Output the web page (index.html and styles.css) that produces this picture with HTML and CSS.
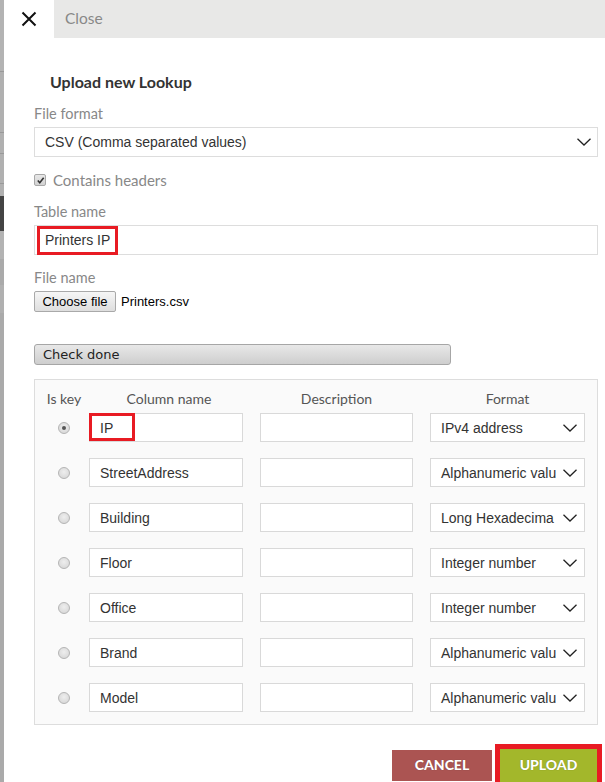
FILE: index.html
```html
<!DOCTYPE html>
<html>
<head>
<meta charset="utf-8">
<link rel="stylesheet" href="styles.css">
</head>
<body>
<div class="page">
  <div class="strip"></div>
  <div class="panel">
    <div class="topbar">
      <div class="xbtn">
        <svg width="16" height="16" viewBox="0 0 16 16"><path d="M1.5 1.5 L14.5 14.5 M14.5 1.5 L1.5 14.5" stroke="#111" stroke-width="2" fill="none"/></svg>
      </div>
      <div class="closebar">Close</div>
    </div>
    <div class="content">
      <div class="title">Upload new Lookup</div>

      <div class="label first">File format</div>
      <div class="field select">
        <span class="val">CSV (Comma separated values)</span>
        <svg class="chev" width="14" height="8" viewBox="0 0 14 8"><path d="M0.5 0.8 L7 7 L13.5 0.8" stroke="#222" stroke-width="1.3" fill="none"/></svg>
      </div>

      <div class="checkrow">
        <span class="checkbox"><svg width="10" height="10" viewBox="0 0 10 10"><path d="M2 5 L4.2 7.5 L8.5 2" stroke="#333" stroke-width="1.8" fill="none"/></svg></span>
        <span class="checklabel">Contains headers</span>
      </div>

      <div class="label">Table name</div>
      <div class="field input">
        <span class="val">Printers IP</span>
        <span class="mark mark-table"></span>
      </div>

      <div class="label">File name</div>
      <div class="filerow">
        <span class="filebtn">Choose file</span>
        <span class="filename">Printers.csv</span>
      </div>

      <div class="checkdone">Check done</div>

      <div class="cols">
        <div class="hd c1">Is key</div>
        <div class="hd c2">Column name</div>
        <div class="hd c3">Description</div>
        <div class="hd c4">Format</div>

        <div class="c1 rcell"><span class="radio on"></span></div>
        <div class="c2"><div class="box name">IP<span class="mark mark-ip"></span></div></div>
        <div class="c3"><div class="box"></div></div>
        <div class="c4"><div class="box fmt"><span class="val">IPv4 address</span><svg class="chev" width="14" height="8" viewBox="0 0 14 8"><path d="M0.5 0.8 L7 7 L13.5 0.8" stroke="#222" stroke-width="1.3" fill="none"/></svg></div></div>

        <div class="c1 rcell"><span class="radio"></span></div>
        <div class="c2"><div class="box name">StreetAddress</div></div>
        <div class="c3"><div class="box"></div></div>
        <div class="c4"><div class="box fmt"><span class="val">Alphanumeric valu</span><svg class="chev" width="14" height="8" viewBox="0 0 14 8"><path d="M0.5 0.8 L7 7 L13.5 0.8" stroke="#222" stroke-width="1.3" fill="none"/></svg></div></div>

        <div class="c1 rcell"><span class="radio"></span></div>
        <div class="c2"><div class="box name">Building</div></div>
        <div class="c3"><div class="box"></div></div>
        <div class="c4"><div class="box fmt"><span class="val">Long Hexadecima</span><svg class="chev" width="14" height="8" viewBox="0 0 14 8"><path d="M0.5 0.8 L7 7 L13.5 0.8" stroke="#222" stroke-width="1.3" fill="none"/></svg></div></div>

        <div class="c1 rcell"><span class="radio"></span></div>
        <div class="c2"><div class="box name">Floor</div></div>
        <div class="c3"><div class="box"></div></div>
        <div class="c4"><div class="box fmt"><span class="val">Integer number</span><svg class="chev" width="14" height="8" viewBox="0 0 14 8"><path d="M0.5 0.8 L7 7 L13.5 0.8" stroke="#222" stroke-width="1.3" fill="none"/></svg></div></div>

        <div class="c1 rcell"><span class="radio"></span></div>
        <div class="c2"><div class="box name">Office</div></div>
        <div class="c3"><div class="box"></div></div>
        <div class="c4"><div class="box fmt"><span class="val">Integer number</span><svg class="chev" width="14" height="8" viewBox="0 0 14 8"><path d="M0.5 0.8 L7 7 L13.5 0.8" stroke="#222" stroke-width="1.3" fill="none"/></svg></div></div>

        <div class="c1 rcell"><span class="radio"></span></div>
        <div class="c2"><div class="box name">Brand</div></div>
        <div class="c3"><div class="box"></div></div>
        <div class="c4"><div class="box fmt"><span class="val">Alphanumeric valu</span><svg class="chev" width="14" height="8" viewBox="0 0 14 8"><path d="M0.5 0.8 L7 7 L13.5 0.8" stroke="#222" stroke-width="1.3" fill="none"/></svg></div></div>

        <div class="c1 rcell"><span class="radio"></span></div>
        <div class="c2"><div class="box name">Model</div></div>
        <div class="c3"><div class="box"></div></div>
        <div class="c4"><div class="box fmt"><span class="val">Alphanumeric valu</span><svg class="chev" width="14" height="8" viewBox="0 0 14 8"><path d="M0.5 0.8 L7 7 L13.5 0.8" stroke="#222" stroke-width="1.3" fill="none"/></svg></div></div>
      </div>

      <div class="footer">
        <span class="btn cancel">CANCEL</span>
        <span class="btn upload">UPLOAD</span>
      </div>
    </div>
  </div>
</div>
</body>
</html>
```

FILE: styles.css
```css
html, body {
  margin: 0;
  padding: 0;
  background: #fff;
  overflow: hidden;
}
body {
  font-family: Lato, "Open Sans", sans-serif;
  color: #333;
}
.page {
  display: flex;
  width: 605px;
  height: 782px;
  overflow: hidden;
}
.strip {
  width: 4px;
  flex: none;
  background: linear-gradient(to bottom,
    #b3b3b3 0, #b3b3b3 71px, #999 71px, #999 72px,
    #b0b0b0 72px, #b0b0b0 132px, #999 132px, #999 133px,
    #b0b0b0 133px, #b0b0b0 153px, #999 153px, #999 154px,
    #b0b0b0 154px, #b0b0b0 183px, #999 183px, #999 184px,
    #b0b0b0 184px, #b0b0b0 196px, #444 196px, #444 231px,
    #b3b3b3 231px, #b3b3b3 259px, #aaa 259px, #aaa 285px,
    #b0b0b0 285px, #b0b0b0 313px, #aaa 313px, #aaa 100%);
}
.panel {
  flex: 1;
  min-width: 0;
}
.topbar {
  display: flex;
  height: 38px;
}
.xbtn {
  width: 50px;
  flex: none;
  display: flex;
  align-items: center;
  justify-content: center;
  background: #fff;
}
.closebar {
  flex: 1;
  background: #e8e8e7;
  color: #888;
  font-size: 15.5px;
  line-height: 37px;
  padding-left: 11px;
}
.content {
  padding: 0 7px 0 30px;
}
.title {
  margin-top: 34px;
  padding-left: 16px;
  font-size: 16px;
  font-weight: bold;
  line-height: 20px;
  color: #333;
}
.label {
  margin-top: 14px;
  font-size: 14.5px;
  line-height: 18px;
  color: #888;
}
.label.first {
  margin-top: 13px;
}
.field {
  position: relative;
  margin-top: 4px;
  height: 30px;
  box-sizing: border-box;
  border: 1px solid #ddd;
  background: #fff;
  display: flex;
  align-items: center;
  padding: 0 6px 0 10px;
  font-family: "Liberation Sans", Arial, sans-serif;
  font-size: 14px;
  color: #333;
}
.field .val {
  flex: 1;
}
.chev {
  flex: none;
}
.checkrow {
  margin-top: 14px;
  display: flex;
  align-items: center;
  gap: 7px;
  line-height: 18px;
}
.checkbox {
  width: 12px;
  height: 12px;
  box-sizing: border-box;
  border: 1px solid #a8a8a8;
  border-radius: 2px;
  background: linear-gradient(#e8e8e8, #d2d2d2);
  display: flex;
  align-items: center;
  justify-content: center;
}
.checkbox svg {
  width: 9px;
  height: 9px;
}
.checklabel {
  font-size: 15px;
  color: #888;
}
.mark {
  position: absolute;
  border: 3px solid #e81b23;
  box-sizing: border-box;
}
.mark-table {
  left: 2px;
  top: 0;
  bottom: -1px;
  width: 81px;
}
.filerow {
  margin-top: 4px;
  display: flex;
  align-items: center;
  gap: 5px;
  font-family: "Liberation Sans", Arial, sans-serif;
  font-size: 13px;
  color: #000;
}
.filebtn {
  box-sizing: border-box;
  width: 82px;
  height: 21px;
  border: 1px solid #a9a9a9;
  border-radius: 2px;
  background: linear-gradient(#f6f6f6, #dedede);
  text-align: center;
  line-height: 19px;
}
.checkdone {
  margin-top: 32px;
  box-sizing: border-box;
  width: 417px;
  height: 21px;
  border: 1px solid #a6a6a6;
  border-radius: 3px;
  background: linear-gradient(#e8e8e8, #cecece);
  font-family: "DejaVu Sans", Verdana, sans-serif;
  font-size: 13px;
  line-height: 19px;
  padding-left: 8px;
  color: #222;
}
.cols {
  margin-top: 14px;
  border: 1px solid #ddd;
  background: #fafafa;
  padding: 10px 0 12px 4px;
  display: grid;
  grid-template-columns: 50px 154px 170px 172px;
  row-gap: 16px;
  align-items: center;
}
.hd {
  font-size: 14px;
  line-height: 18px;
  color: #555;
  text-align: center;
  margin-bottom: -11px;
  align-self: start;
}
.hd.c2 {
  padding-left: 6px;
}
.c3, .c4 {
  padding-left: 17px;
}
.rcell {
  display: flex;
  justify-content: center;
}
.radio {
  width: 12px;
  height: 12px;
  box-sizing: border-box;
  border-radius: 50%;
  border: 1px solid #b4b4b4;
  background: radial-gradient(circle at 50% 40%, #eee, #d3d3d3);
  display: flex;
  align-items: center;
  justify-content: center;
}
.radio.on::after {
  content: "";
  width: 4px;
  height: 4px;
  border-radius: 50%;
  background: #555;
}
.box {
  position: relative;
  height: 29px;
  box-sizing: border-box;
  border: 1px solid #d9d9d9;
  background: #fff;
  font-family: "Liberation Sans", Arial, sans-serif;
  font-size: 14px;
  color: #333;
  display: flex;
  align-items: center;
  padding-left: 10px;
}
.box.fmt {
  padding-right: 7px;
}
.box.fmt .val {
  flex: 1;
  white-space: nowrap;
  margin-right: 6px;
}
.mark-ip {
  left: -1px;
  top: -1px;
  bottom: 0;
  width: 46px;
}
.footer {
  margin-top: 25px;
  display: flex;
  justify-content: flex-end;
  align-items: flex-start;
  padding-right: 1px;
}
.btn {
  display: block;
  color: #fff;
  font-weight: 900;
  font-size: 14px;
  text-align: center;
  text-shadow: 0 0 1px rgba(0, 0, 0, 0.35);
}
.cancel {
  width: 100px;
  height: 31px;
  line-height: 29px;
  background: #ab5452;
  margin-right: 8px;
}
.upload {
  width: 97px;
  height: 33px;
  line-height: 31px;
  margin-top: -1px;
  background: #a3b72b;
  box-shadow: 0 0 0 5px #e81b23;
}
```
